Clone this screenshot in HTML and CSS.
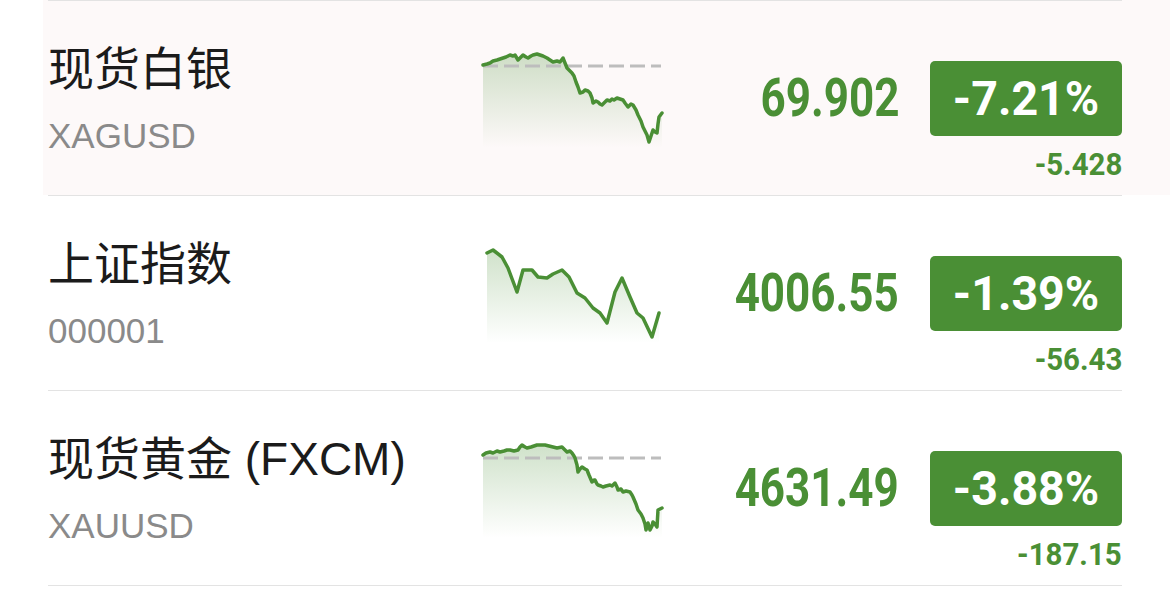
FILE: index.html
```html
<!DOCTYPE html>
<html lang="zh-CN">
<head>
    <meta charset="UTF-8">
    <title>行情</title>
    <link rel="stylesheet" href="styles.css">
</head>
<body>
<section class="list">
    <div class="row row-active">
        <div class="row-body">
            <div class="name">
                <p class="title">现货白银</p>
                <p class="code">XAGUSD</p>
            </div>
            <svg class="spark" width="180" height="100" viewBox="0 0 180 100">
                <defs>
                    <linearGradient id="fade1" x1="0" y1="0" x2="0" y2="1">
                        <stop offset="0" stop-color="#4a8f35" stop-opacity="0.26"/>
                        <stop offset="1" stop-color="#4a8f35" stop-opacity="0"/>
                    </linearGradient>
                </defs>
                <polygon fill="url(#fade1)" points="0,17 4,16 7,15 10,13 14,12 17,11 20,10 23,9 27,7 30,8 32,7 35,12 38,9 40,7 43,9 45,10 48,8 50,7 54,6 57,7 60,8 64,10 67,12 70,14 74,13 77,14 80,10 82,15 84,20 87,23 89,25 91,28 93,34 95,39 97,45 100,44 102,42 105,43 107,45 109,50 110,55 113,53 115,54 117,56 119,57 122,54 124,52 127,53 129,51 131,52 134,50 137,51 140,52 142,55 145,59 148,56 150,57 153,62 155,67 158,73 160,79 162,83 164,87 166,94 168,88 170,82 172,84 174,85 175,76 176,69 179,65 179,100 0,100"/>
                <line class="base" x1="0" y1="18" x2="178" y2="18"/>
                <polyline class="line" points="0,17 4,16 7,15 10,13 14,12 17,11 20,10 23,9 27,7 30,8 32,7 35,12 38,9 40,7 43,9 45,10 48,8 50,7 54,6 57,7 60,8 64,10 67,12 70,14 74,13 77,14 80,10 82,15 84,20 87,23 89,25 91,28 93,34 95,39 97,45 100,44 102,42 105,43 107,45 109,50 110,55 113,53 115,54 117,56 119,57 122,54 124,52 127,53 129,51 131,52 134,50 137,51 140,52 142,55 145,59 148,56 150,57 153,62 155,67 158,73 160,79 162,83 164,87 166,94 168,88 170,82 172,84 174,85 175,76 176,69 179,65"/>
            </svg>
            <div class="quote">
                <span class="price">69.902</span>
                <span class="badge"><span class="badge-text">-7.21%</span></span>
                <span class="change">-5.428</span>
            </div>
        </div>
    </div>
    <div class="row">
        <div class="row-body">
            <div class="name">
                <p class="title">上证指数</p>
                <p class="code">000001</p>
            </div>
            <svg class="spark" width="180" height="100" viewBox="0 0 180 100">
                <defs>
                    <linearGradient id="fade2" x1="0" y1="0" x2="0" y2="1">
                        <stop offset="0" stop-color="#4a8f35" stop-opacity="0.26"/>
                        <stop offset="1" stop-color="#4a8f35" stop-opacity="0"/>
                    </linearGradient>
                </defs>
                <polygon fill="url(#fade2)" points="4,10 10,7 19,14 25,25 34,49 40,27 49,27 55,34 64,35 70,31 79,27 86,34 94,50 102,55 110,65 117,70 124,80 132,49 139,35 147,54 154,70 160,75 169,94 176,70 176,100 4,100"/>
                <polyline class="line" points="4,10 10,7 19,14 25,25 34,49 40,27 49,27 55,34 64,35 70,31 79,27 86,34 94,50 102,55 110,65 117,70 124,80 132,49 139,35 147,54 154,70 160,75 169,94 176,70"/>
            </svg>
            <div class="quote">
                <span class="price">4006.55</span>
                <span class="badge"><span class="badge-text">-1.39%</span></span>
                <span class="change">-56.43</span>
            </div>
        </div>
    </div>
    <div class="row">
        <div class="row-body">
            <div class="name">
                <p class="title">现货黄金 (FXCM)</p>
                <p class="code">XAUUSD</p>
            </div>
            <svg class="spark" width="180" height="100" viewBox="0 0 180 100">
                <defs>
                    <linearGradient id="fade3" x1="0" y1="0" x2="0" y2="1">
                        <stop offset="0" stop-color="#4a8f35" stop-opacity="0.26"/>
                        <stop offset="1" stop-color="#4a8f35" stop-opacity="0"/>
                    </linearGradient>
                </defs>
                <polygon fill="url(#fade3)" points="0,17 3,15 7,14 10,15 14,13 17,14 21,13 24,12 27,12 31,13 35,12 37,9 39,7 42,9 44,10 48,9 51,8 54,7 58,7 62,7 66,8 70,9 74,10 79,9 82,12 84,14 87,13 89,15 91,18 92,20 94,27 95,34 97,31 99,29 102,31 104,32 106,37 109,44 111,42 112,42 114,46 115,47 118,48 120,49 123,48 127,47 129,48 132,45 134,49 135,52 138,51 140,54 143,53 147,54 149,57 150,59 153,66 155,72 158,76 160,80 162,86 163,92 165,85 167,92 169,88 170,84 172,86 174,89 175,72 177,71 179,70 179,100 0,100"/>
                <line class="base" x1="0" y1="20" x2="178" y2="20"/>
                <polyline class="line" points="0,17 3,15 7,14 10,15 14,13 17,14 21,13 24,12 27,12 31,13 35,12 37,9 39,7 42,9 44,10 48,9 51,8 54,7 58,7 62,7 66,8 70,9 74,10 79,9 82,12 84,14 87,13 89,15 91,18 92,20 94,27 95,34 97,31 99,29 102,31 104,32 106,37 109,44 111,42 112,42 114,46 115,47 118,48 120,49 123,48 127,47 129,48 132,45 134,49 135,52 138,51 140,54 143,53 147,54 149,57 150,59 153,66 155,72 158,76 160,80 162,86 163,92 165,85 167,92 169,88 170,84 172,86 174,89 175,72 177,71 179,70"/>
            </svg>
            <div class="quote">
                <span class="price">4631.49</span>
                <span class="badge"><span class="badge-text">-3.88%</span></span>
                <span class="change">-187.15</span>
            </div>
        </div>
    </div>
</section>
</body>
</html>
```

FILE: styles.css
```css
body, p {
    margin: 0; padding: 0;
}
body {
    background: #fff;
    font-family: "Liberation Sans", "Noto Sans CJK SC", sans-serif;
}
.list {
    width: 1170px;
}
.row {
    margin-left: 43px; padding: 0 48px 0 5px;
}
.row-active {
    background: #fdf9f9;
}
.row-body {
    height: 194px; border-top: 1px solid #e3e3e3;
    display: flex; align-items: center;
}
.row:last-child .row-body {
    border-bottom: 1px solid #e3e3e3;
}

.name {
    width: 435px; flex: none;
}
.title {
    font-size: 46px; line-height: 56px; color: #1b1b1b;
}
.code {
    font-size: 35px; line-height: 40px; color: #8a8a8a; margin-top: 19px;
}

.spark {
    flex: none; display: block; overflow: visible;
}
.spark .line {
    fill: none; stroke: #4a8f35; stroke-width: 3.5; stroke-linejoin: round; stroke-linecap: round;
}
.spark .base {
    stroke: #bdbdbd; stroke-width: 3; stroke-dasharray: 15 6;
}

.quote {
    flex: 1; display: grid; grid-template-columns: 1fr 192px; column-gap: 31px;
    align-items: center; padding-top: 46px;
    font-family: Roboto, sans-serif; font-weight: 700;
}
.price {
    justify-self: end; display: inline-block; transform: scaleX(0.83); transform-origin: right center;
    color: #4a8f35; font-size: 53px; line-height: 60px;
}
.badge {
    height: 75px; border-radius: 5px; background: #4a8f35; color: #fff;
    font-size: 49px; line-height: 75px; text-align: center;
}
.badge-text {
    display: inline-block; transform: scaleX(0.95);
}
.change {
    grid-column: 2; justify-self: end; display: inline-block;
    transform: scaleX(0.92); transform-origin: right center; margin-top: 10px;
    color: #4a8f35; font-size: 32px; line-height: 36px;
}
```
